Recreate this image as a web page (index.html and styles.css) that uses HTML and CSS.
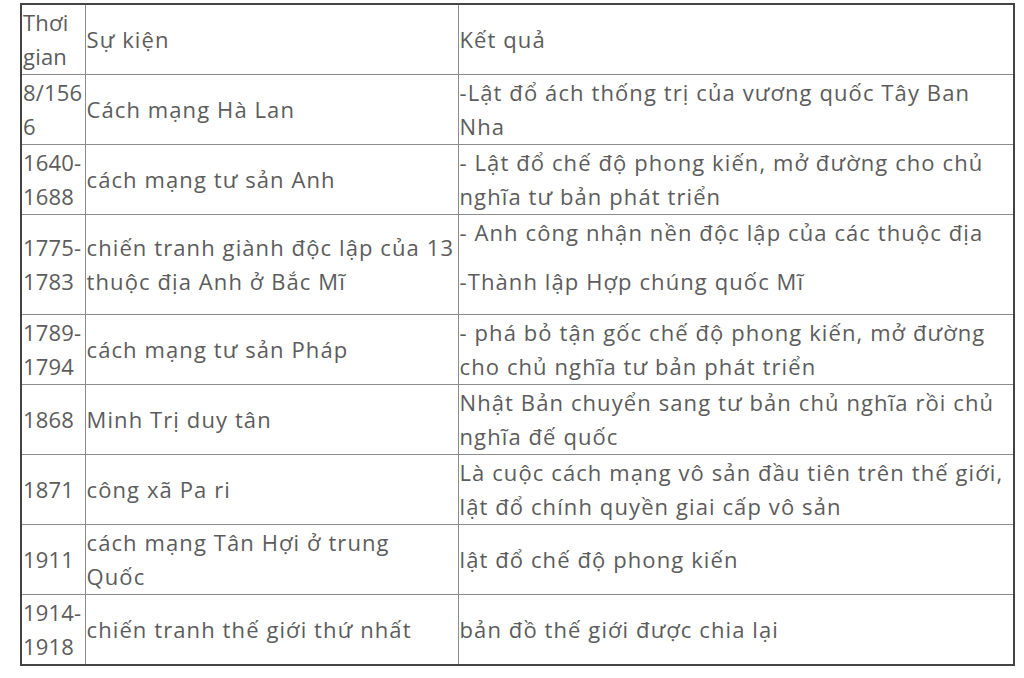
FILE: index.html
```html
<!DOCTYPE html>
<html lang="vi">
<head>
<meta charset="utf-8">
<link rel="stylesheet" href="styles.css">
</head>
<body>
<table class="events">
<colgroup>
<col class="c-time">
<col class="c-event">
<col class="c-result">
</colgroup>
<tr>
<td>Thơi<br>gian</td>
<td>Sự kiện</td>
<td>Kết quả</td>
</tr>
<tr>
<td>8/156<br>6</td>
<td>Cách mạng Hà Lan</td>
<td>-Lật đổ ách thống trị của vương quốc Tây Ban<br>Nha</td>
</tr>
<tr>
<td>1640-<br>1688</td>
<td>cách mạng tư sản Anh</td>
<td>- Lật đổ chế độ phong kiến, mở đường cho chủ<br>nghĩa tư bản phát triển</td>
</tr>
<tr class="tall">
<td>1775-<br>1783</td>
<td>chiến tranh giành độc lập của 13<br>thuộc địa Anh ở Bắc Mĩ</td>
<td><p>- Anh công nhận nền độc lập của các thuộc địa</p><p>-Thành lập Hợp chúng quốc Mĩ</p></td>
</tr>
<tr>
<td>1789-<br>1794</td>
<td>cách mạng tư sản Pháp</td>
<td>- phá bỏ tận gốc chế độ phong kiến, mở đường<br>cho chủ nghĩa tư bản phát triển</td>
</tr>
<tr>
<td>1868</td>
<td>Minh Trị duy tân</td>
<td>Nhật Bản chuyển sang tư bản chủ nghĩa rồi chủ<br>nghĩa đế quốc</td>
</tr>
<tr>
<td>1871</td>
<td>công xã Pa ri</td>
<td>Là cuộc cách mạng vô sản đầu tiên trên thế giới,<br>lật đổ chính quyền giai cấp vô sản</td>
</tr>
<tr>
<td>1911</td>
<td>cách mạng Tân Hợi ở trung<br>Quốc</td>
<td>lật đổ chế độ phong kiến</td>
</tr>
<tr>
<td>1914-<br>1918</td>
<td>chiến tranh thế giới thứ nhất</td>
<td>bản đồ thế giới được chia lại</td>
</tr>
</table>
</body>
</html>
```

FILE: styles.css
```css
html, body {
  margin: 0;
  padding: 0;
  background: #ffffff;
}
body {
  padding: 3px 0 0 20px;
}
.events {
  border-collapse: collapse;
  table-layout: fixed;
  width: 993px;
  border: 2px solid #444;
  font-family: "Open Sans", "Noto Sans", sans-serif;
  font-size: 22px;
  line-height: 34px;
  letter-spacing: 1.1px;
  color: #5c5c5c;
}
.c-time { width: 64px; }
.c-event { width: 373px; }
.c-result { width: 556px; }
.events td {
  border: 1px solid #8c8c8c;
  padding: 0 0 1px 1px;
  vertical-align: middle;
  white-space: nowrap;
  overflow: hidden;
  height: 68px;
}
.events td:first-child {
  letter-spacing: 0.2px;
}
.events p {
  margin: 0 0 15px;
}
.events .tall td {
  height: 98px;
}
```
